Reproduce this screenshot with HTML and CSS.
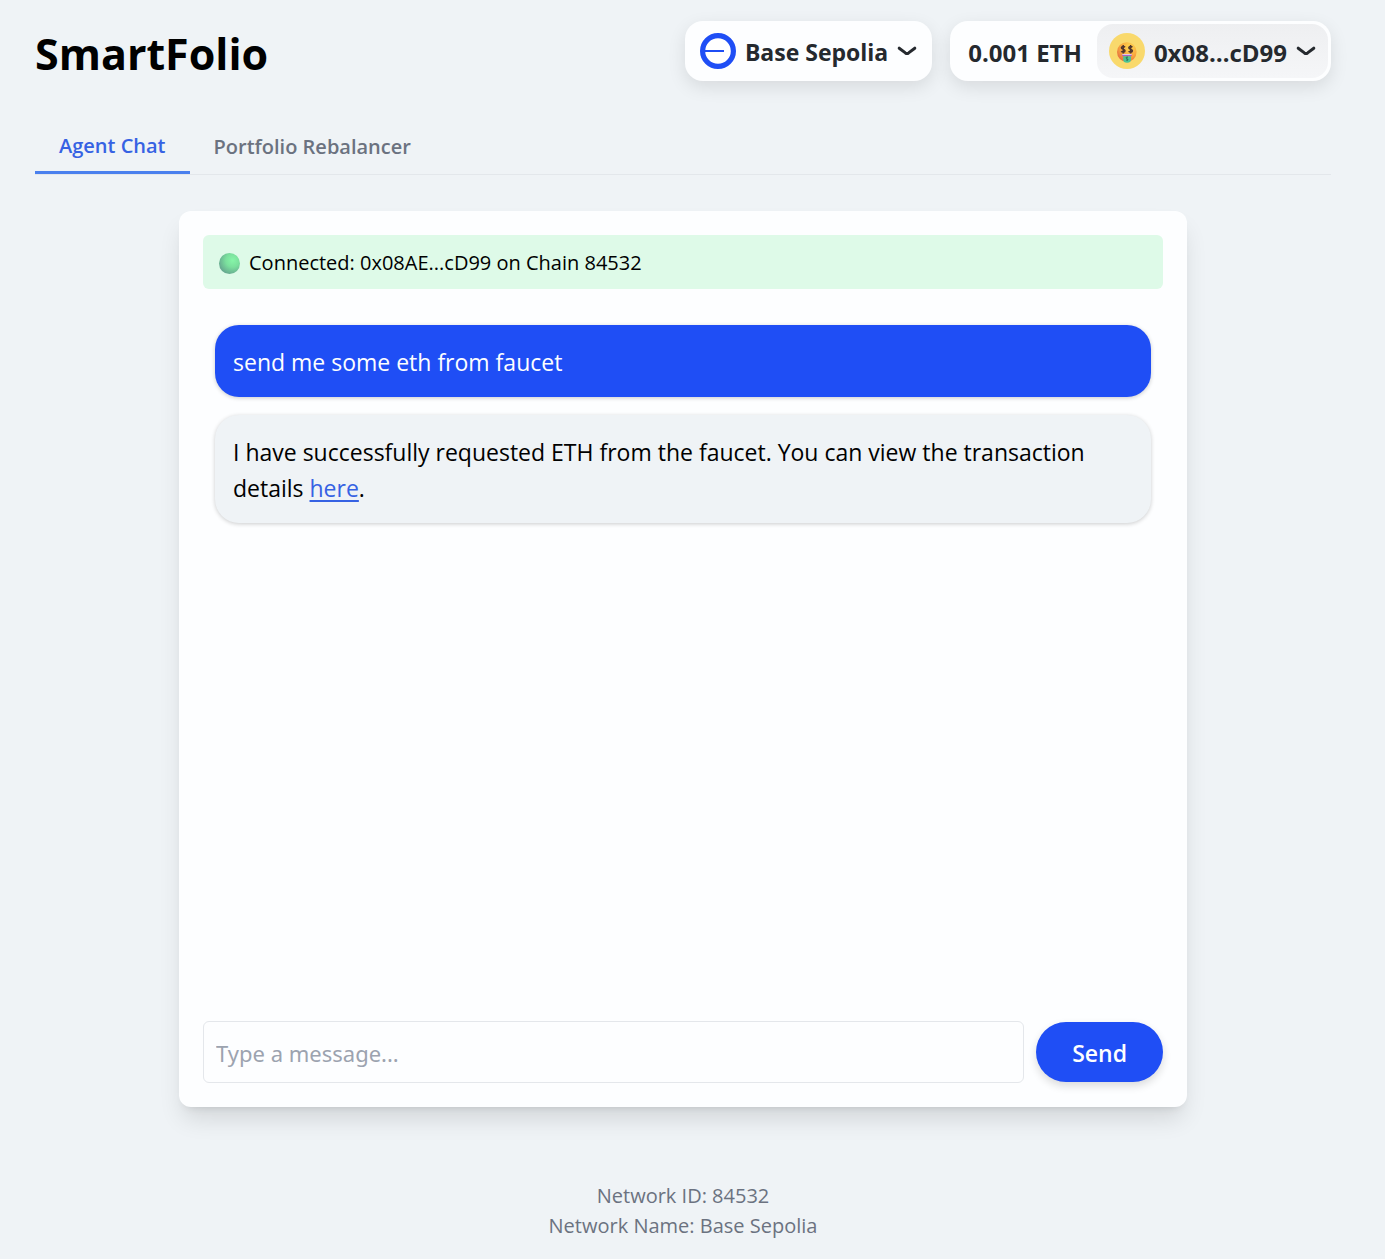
FILE: index.html
```html
<!DOCTYPE html>
<html lang="en">
<head>
<meta charset="utf-8">
<meta name="viewport" content="width=device-width, initial-scale=1">
<title>SmartFolio</title>
<link rel="stylesheet" href="styles.css">
</head>
<body>
<div class="page">
  <header class="header">
    <h1 class="brand">SmartFolio</h1>
    <div class="wallet">
      <button class="pill network" type="button">
        <svg class="pill-icon" viewBox="0 0 36 36" aria-hidden="true">
          <circle cx="18" cy="18" r="15.4" fill="#fff" stroke="#1f4ef5" stroke-width="5.2"/>
          <path d="M5 18H24" stroke="#1f4ef5" stroke-width="2"/>
        </svg>
        <span class="pill-text">Base Sepolia</span>
        <svg class="chevron" viewBox="0 0 20 12" aria-hidden="true"><path d="M2.2 3.2 L8.4 7.9 Q10 9 11.6 7.9 L17.8 3.2" fill="none" stroke="#25292e" stroke-width="3" stroke-linecap="round" stroke-linejoin="round"/></svg>
      </button>
      <button class="pill account" type="button">
        <span class="balance pill-text">0.001 ETH</span>
        <span class="address">
          <svg class="pill-icon" viewBox="0 0 36 36" aria-hidden="true">
            <defs>
              <radialGradient id="face" cx=".65" cy=".25" r=".85">
                <stop offset="0" stop-color="#ffd84f"/>
                <stop offset=".55" stop-color="#f9a83f"/>
                <stop offset="1" stop-color="#e0603f"/>
              </radialGradient>
            </defs>
            <circle cx="18" cy="18" r="18" fill="#f9d96c"/>
            <circle cx="17.8" cy="19" r="9.8" fill="url(#face)"/>
            <g fill="none" stroke="#4f352e" stroke-width="1.5">
              <path d="M16 14.2c-1-1.2-3.6-1-3.6.6 0 1.7 3.6 1.2 3.6 3 0 1.6-2.6 1.8-3.8.5M14.2 12v8.5"/>
              <path d="M23.4 14.2c-1-1.2-3.6-1-3.6.6 0 1.7 3.6 1.2 3.6 3 0 1.6-2.6 1.8-3.8.5M21.6 12v8.5"/>
            </g>
            <path d="M13.3 21.2h9.4v2h-9.4z" fill="#9a3fb5"/>
            <path d="M13.3 21.2h9.4v1h-9.4z" fill="#f3e6fa"/>
            <path d="M14.2 23.2h7.8v3.3a3.9 3.2 0 0 1-7.8 0z" fill="#4cc493"/>
            <path d="M19 24.3c-2-.8-2.4 1-.9 1.5s1.2 2-.9 1.2" fill="none" stroke="#285c4d" stroke-width="1"/>
          </svg>
          <span class="pill-text">0x08…cD99</span>
          <svg class="chevron" viewBox="0 0 20 12" aria-hidden="true"><path d="M2.2 3.2 L8.4 7.9 Q10 9 11.6 7.9 L17.8 3.2" fill="none" stroke="#25292e" stroke-width="3" stroke-linecap="round" stroke-linejoin="round"/></svg>
        </span>
      </button>
    </div>
  </header>

  <nav class="tabs">
    <button class="tab tab-active" type="button">Agent Chat</button>
    <button class="tab" type="button">Portfolio Rebalancer</button>
  </nav>

  <main class="card">
    <p class="status"><span class="dot"></span>Connected: 0x08AE...cD99 on Chain 84532</p>
    <div class="messages">
      <p class="message message-user">send me some eth from faucet</p>
      <p class="message message-agent">I have successfully requested ETH from the faucet. You can view the transaction details <a class="link" href="#">here</a>.</p>
    </div>
    <form class="composer">
      <input class="field" type="text" placeholder="Type a message..." aria-label="Message">
      <button class="send" type="button">Send</button>
    </form>
  </main>

  <footer class="footer">
    <p>Network ID: 84532</p>
    <p>Network Name: Base Sepolia</p>
  </footer>
</div>
</body>
</html>
```
FILE: styles.css
```css
*, *::before, *::after { box-sizing: border-box; }

body, h1, p { margin: 0; }

body {
  background: #eff3f6;
  color: #000;
  font-family: "Open Sans", "Noto Sans", sans-serif;
  font-size: 23px;
}

button, input { font: inherit; color: inherit; }

button {
  border: 0;
  padding: 0;
  background: none;
  cursor: pointer;
}

.page {
  display: flex;
  flex-direction: column;
  min-height: 100vh;
  padding: 21px 54px 18px 35px;
}

.header {
  display: flex;
  align-items: center;
  justify-content: space-between;
  height: 60px;
}

.brand {
  font-size: 43px;
  font-weight: 700;
  line-height: 54px;
  padding-top: 6px;
}

.wallet {
  display: flex;
  gap: 18px;
}

.pill {
  display: flex;
  align-items: center;
  height: 60px;
  border-radius: 18px;
  background: #fdfeff;
  box-shadow: 0 6px 18px rgba(0, 0, 0, .1);
  color: #25292e;
  font-weight: 700;
  white-space: nowrap;
}

.pill-text { padding-top: 2px; }

.network {
  gap: 9px;
  padding: 0 15px;
}

.account {
  padding: 3px;
  font-size: 24px;
}

.balance {
  padding-right: 15px;
  padding-left: 15px;
}

.address {
  display: flex;
  align-items: center;
  gap: 9px;
  height: 54px;
  padding: 0 12px;
  border-radius: 16px;
  background: linear-gradient(#eeeff1, #f5f6f8);
}

.pill-icon {
  width: 36px;
  height: 36px;
}

.chevron {
  width: 20px;
  height: 12px;
}

.tabs {
  display: flex;
  height: 58px;
  margin-top: 36px;
  border-bottom: 1px solid #e3e7eb;
}

.tab {
  height: 57px;
  padding: 2px 24px 0;
  color: #6b7280;
  font-size: 20px;
  font-weight: 600;
}

.tab-active {
  border-bottom: 3px solid #4a80ee;
  color: #3662e3;
}

.card {
  display: flex;
  flex: 1;
  flex-direction: column;
  width: 100%;
  max-width: 1008px;
  margin: 36px auto 0;
  padding: 24px;
  border-radius: 12px;
  background: #fdfeff;
  box-shadow: 0 15px 24px -4px rgba(0, 0, 0, .12), 0 6px 9px -6px rgba(0, 0, 0, .12);
}

.status {
  display: flex;
  align-items: center;
  gap: 9px;
  padding: 13px 16px 11px;
  border-radius: 6px;
  background: #defae8;
  font-size: 20px;
  line-height: 30px;
}

.dot {
  width: 21px;
  height: 21px;
  border-radius: 50%;
  background: radial-gradient(circle at 65% 35%, #86f5a8, #7be09d 35%, #619a8c 85%);
}

.messages {
  display: flex;
  flex: 1;
  flex-direction: column;
  gap: 18px;
  padding: 36px 12px;
}

.message {
  padding: 19px 18px 17px;
  border-radius: 24px;
  box-shadow: 0 1px 4px rgba(0, 0, 0, .2);
  line-height: 36px;
}

.message-user {
  background: #1f4ef5;
  color: #fdfeff;
}

.message-agent { background: #eff3f6; }

.link {
  display: inline-block;
  color: #3662e3;
  text-underline-offset: 3px;
}

.composer {
  display: flex;
  align-items: center;
  gap: 12px;
}

.field {
  flex: 1;
  min-width: 0;
  height: 62px;
  padding: 1px 12px 0;
  border: 1px solid #e4e7eb;
  border-radius: 6px;
  background: #fdfeff;
  font-family: "Noto Sans", "Open Sans", sans-serif;
  font-size: 22px;
}

.field::placeholder {
  color: #9ca3af;
  opacity: 1;
}

.send {
  height: 60px;
  padding: 2px 36px 0;
  border-radius: 30px;
  background: #1f4ef5;
  box-shadow: 0 4px 8px rgba(0, 0, 0, .14);
  color: #fdfeff;
  font-weight: 600;
}

.footer {
  margin-top: 74px;
  color: #6b7280;
  font-size: 20px;
  line-height: 30px;
  text-align: center;
}
```
